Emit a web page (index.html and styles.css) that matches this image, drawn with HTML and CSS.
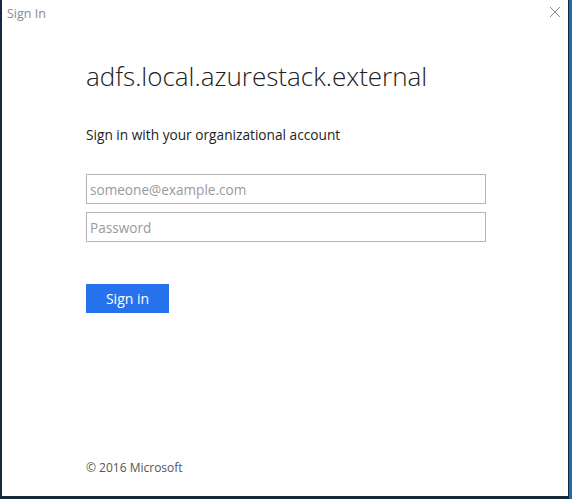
FILE: index.html
```html
<!DOCTYPE html>
<html lang="en">
  <head>
    <meta charset="UTF-8" />
    <meta name="viewport" content="width=device-width, initial-scale=1.0" />
    <title>Sign In</title>
    <link rel="stylesheet" href="styles.css">
  </head>
  <body>
    <div class="window">
      <div class="titlebar">
        <span class="title">Sign In</span>
        <span class="close">
          <svg width="12" height="12" viewBox="0 0 12 12">
            <path d="M1 1 L11 11 M11 1 L1 11" stroke="#8a8a8a" stroke-width="1" fill="none" />
          </svg>
        </span>
      </div>
      <main class="content">
        <h1 class="realm">adfs.local.azurestack.external</h1>
        <p class="intro">Sign in with your organizational account</p>
        <form class="login" onsubmit="return false">
          <input class="field" type="text" placeholder="someone@example.com" />
          <input class="field" type="password" placeholder="Password" />
          <button class="submit" type="submit">Sign in</button>
        </form>
        <footer class="copyright">&copy; 2016 Microsoft</footer>
      </main>
    </div>
  </body>
</html>
```

FILE: styles.css
```css
html, body {
  margin: 0;
  height: 100%;
}

body {
  background: linear-gradient(to right, rgb(20, 40, 62) calc(100% - 3px), rgb(28, 110, 175) 0);
  font-family: 'Open Sans', 'Noto Sans', sans-serif;
  padding: 0 4px 3px 2px;
  box-sizing: border-box;
}

.window {
  height: 100%;
  background-color: white;
  display: flex;
  flex-direction: column;
}

.titlebar {
  height: 28px;
  display: flex;
  justify-content: space-between;
  align-items: flex-start;
}

.title {
  margin: 5px 0 0 5px;
  font-size: 12.5px;
  color: #8a8a8a;
}

.close {
  margin: 6px 7px 0 0;
  display: flex;
}

.content {
  flex: 1;
  display: flex;
  flex-direction: column;
  padding: 0 0 0 84px;
}

.realm {
  margin: 30px 0 0 0;
  font-size: 26px;
  font-weight: 300;
  line-height: 36px;
  color: #212121;
}

.intro {
  margin: 32px 0 0 0;
  font-size: 13.7px;
  line-height: 18px;
  color: #222;
}

.login {
  display: flex;
  flex-direction: column;
  margin-top: 30px;
}

.field {
  width: 400px;
  height: 30px;
  box-sizing: border-box;
  margin: 0 0 8px 0;
  padding: 0 3px;
  border: 1px solid #b5b5b5;
  font-family: inherit;
  font-size: 13.6px;
  color: #222;
}

.field::placeholder {
  color: #9a9a9a;
}

.submit {
  align-self: flex-start;
  width: 83px;
  height: 29px;
  margin-top: 34px;
  border: 0;
  background-color: #2672ec;
  color: white;
  font-family: inherit;
  font-size: 14px;
}

.copyright {
  margin-top: auto;
  margin-bottom: 20px;
  font-size: 12px;
  line-height: 16px;
  color: #555;
}
```
